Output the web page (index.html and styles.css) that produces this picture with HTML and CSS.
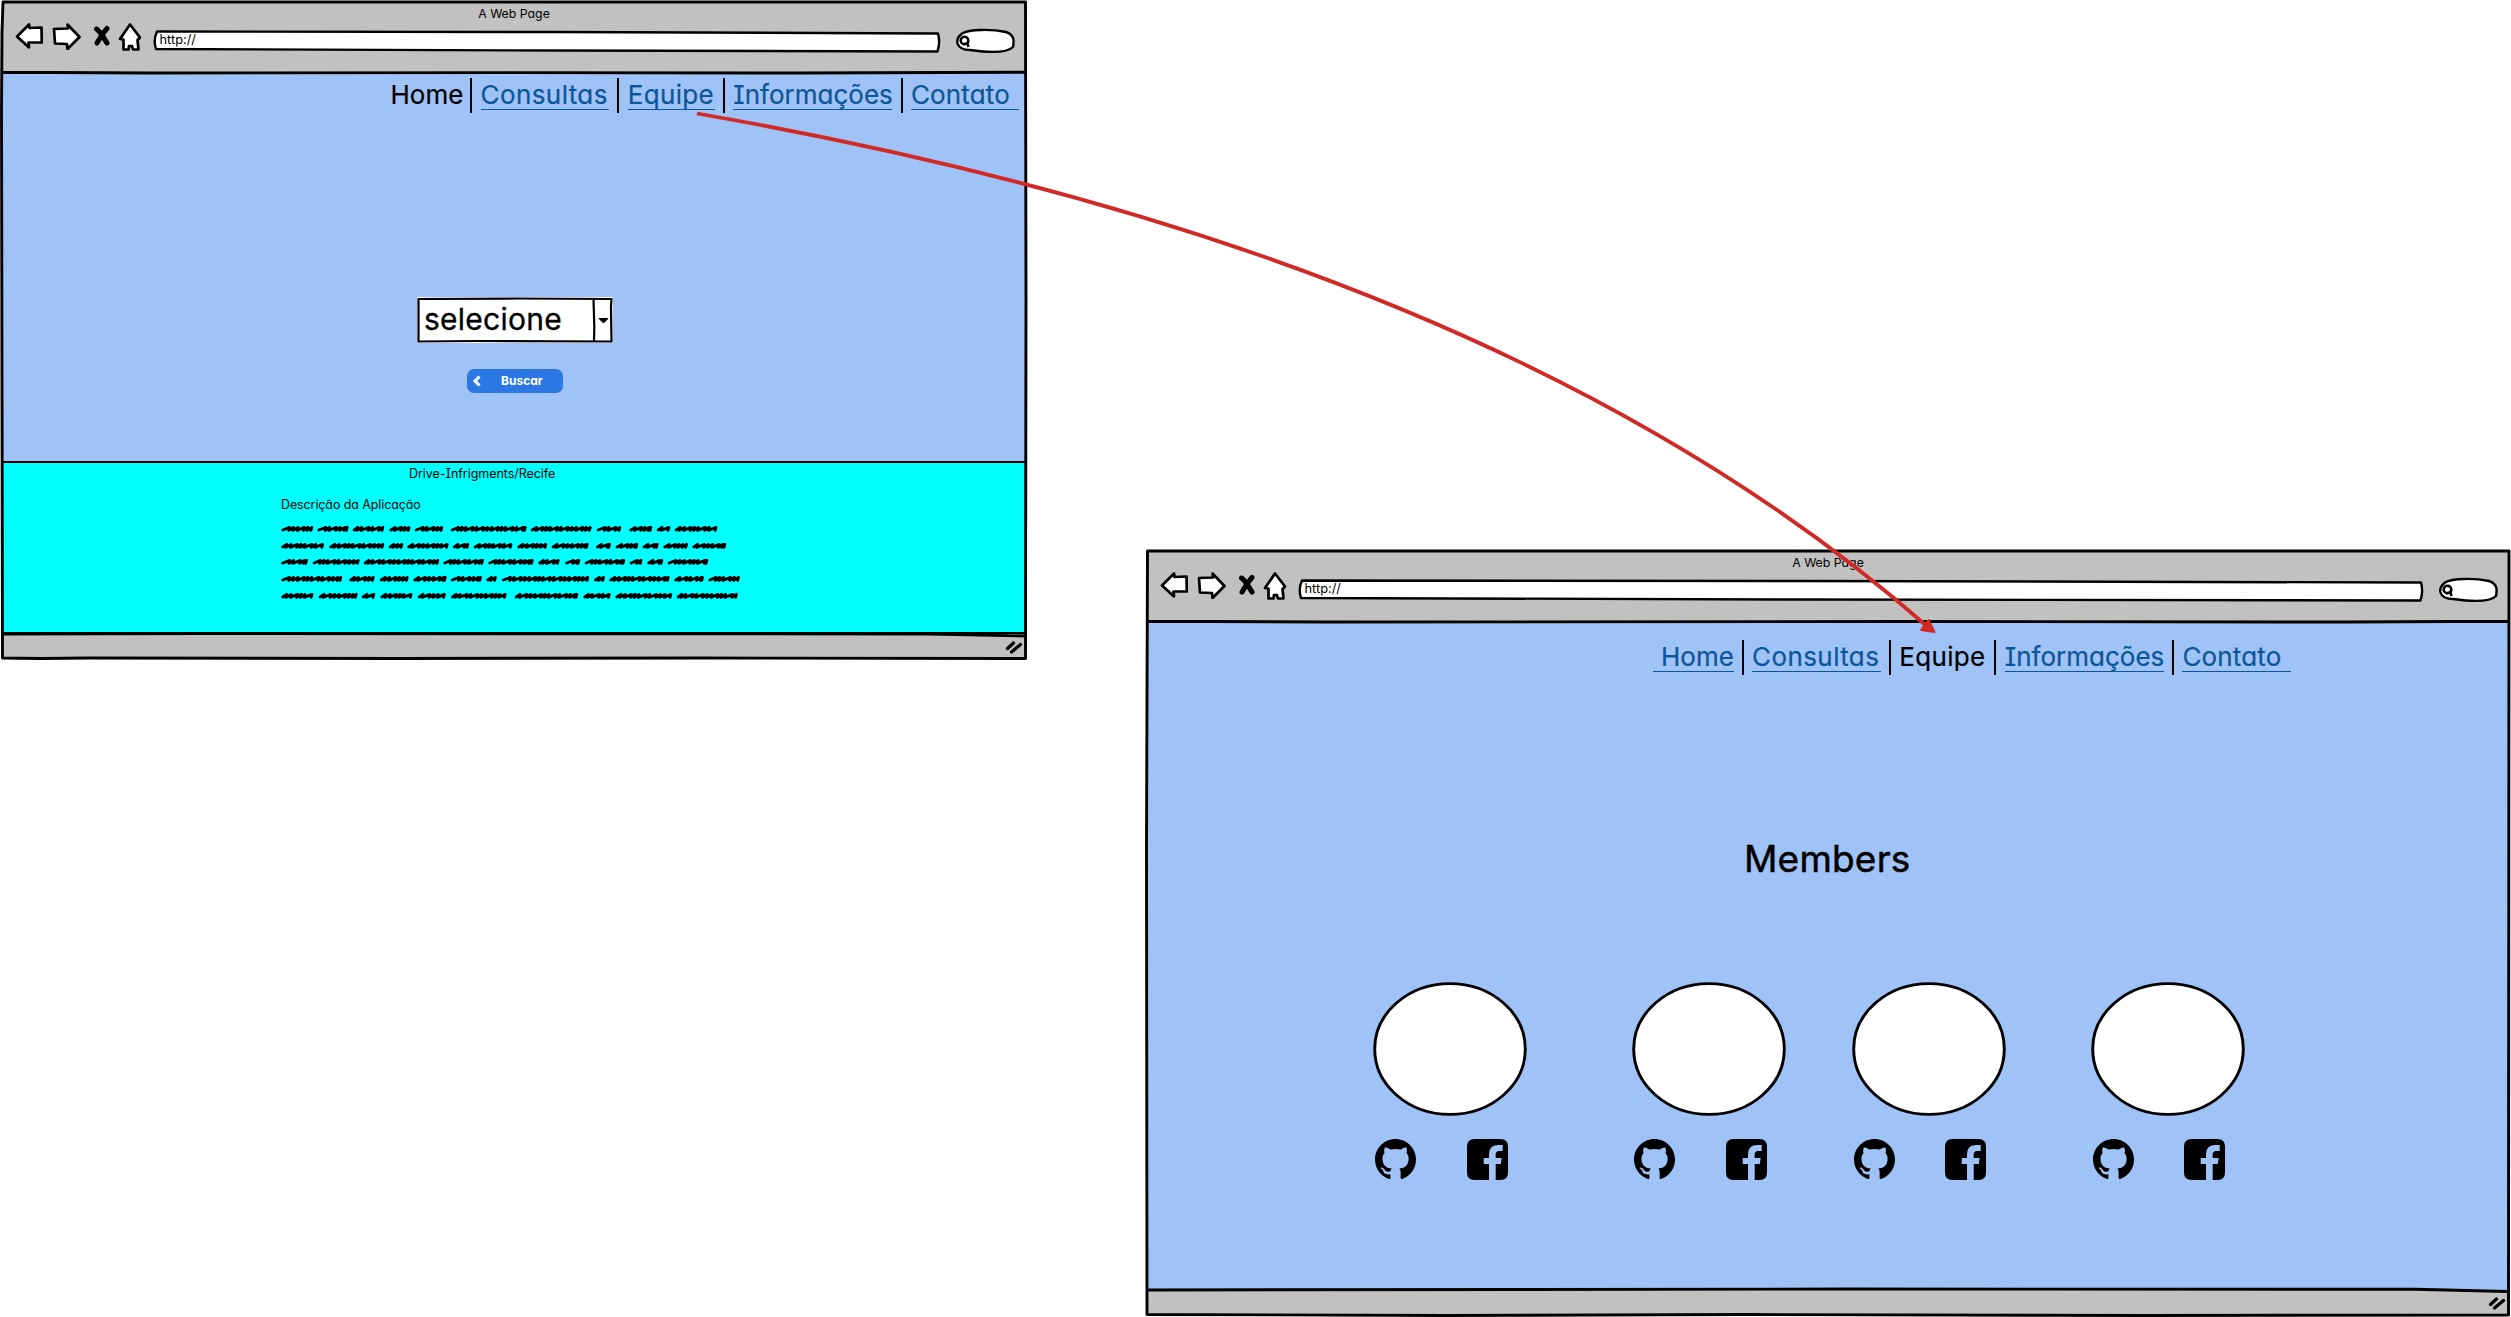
FILE: index.html
```html
<!DOCTYPE html>
<html lang="pt-BR">
<head>
<meta charset="utf-8">
<title>Drive-Infrigments/Recife</title>
<link rel="stylesheet" href="styles.css">
</head>
<body>
<svg class="symbols" aria-hidden="true">
  <symbol id="back" viewBox="0 0 28 28"><path d="M2 14.500 L14 2.500 L14.500 6 L26.500 5.500 L26.800 20.500 L13.500 20.500 L14 25.500 Z"/></symbol>
  <symbol id="forward" viewBox="0 0 29 28"><path d="M2 7 L16 6.500 L15.500 2.500 L27.500 15 L15.500 27 L15 22 L3 21.500 Z"/></symbol>
  <symbol id="stop" viewBox="0 0 18 22"><path d="M3.500 4 C7 6 11 13 14 18 M14 3.500 C10 8 7 13 4 18"/></symbol>
  <symbol id="home" viewBox="0 0 24 30"><path d="M12 2.500 L22 15.500 L19.500 18 L20.500 27.500 L15 27.500 L14 24 L11 24 L10.500 27.500 L5.500 27.500 L5.500 17.500 L2 17 Z"/></symbol>
  <symbol id="search" viewBox="0 0 61 26"><path class="box" d="M7 5.500 C14 1 37 1 51 4 C60 7 59 14 58 19 C52 25 36 25 15 22 C1 22 -1 12 7 5.500 Z"/><circle class="lens" cx="9.500" cy="12.500" r="3.800"/><path class="lens" d="M8 16.300 L12.500 15.500 L13.500 19"/></symbol>
  <symbol id="github" viewBox="0 0 16 16"><path d="M8 0C3.580 0 0 3.580 0 8c0 3.540 2.290 6.530 5.470 7.590.4.070.55-.17.55-.38 0-.19-.01-.82-.01-1.490-2.010.37-2.530-.49-2.690-.94-.09-.23-.48-.94-.82-1.130-.28-.15-.68-.52-.01-.53.63-.01 1.080.58 1.230.82.72 1.210 1.870.87 2.330.66.070-.52.28-.87.51-1.070-1.780-.2-3.640-.89-3.640-3.950 0-.87.31-1.590.82-2.150-.08-.2-.36-1.020.08-2.120 0 0 .67-.21 2.200.82.64-.18 1.320-.27 2-.27s1.360.09 2 .27c1.530-1.040 2.200-.82 2.200-.82.44 1.100.16 1.920.08 2.120.51.56.82 1.270.82 2.150 0 3.070-1.870 3.750-3.650 3.950.29.25.54.73.54 1.480 0 1.070-.01 1.930-.01 2.200 0 .21.15.46.55.38A8.010 8.010 0 0 0 16 8c0-4.420-3.580-8-8-8z"/></symbol>
  <symbol id="facebook" viewBox="0 0 41 41"><path d="M7.500 0 H33.500 Q41 0 41 7.500 V33.500 Q41 41 33.500 41 H28.700 V25 H33.800 L34.700 19 H28.700 V15.500 Q28.700 12 32 12 H35.700 V6 H31.500 Q22 6 22 15 V19 H16.700 V25 H22 V41 H7.500 Q0 41 0 33.500 V7.500 Q0 0 7.500 0 Z"/></symbol>
  <symbol id="grip" viewBox="0 0 18 14"><path d="M2.500 8.500 L8.500 3 M6.500 12 L15.500 4.500"/></symbol>
</svg>

<section class="window window-home">
  <svg class="frame" viewBox="0 0 1028 661"><path d="M2 32 L3 2 L1025.500 2 L1026 300 L1025.500 658.500 L700 658 L400 658.500 L90 658 L40 658.500 L2.500 658 L1.500 110 Z M3 72.300 L150 73 L520 72.600 L800 73 L1025 72.200 M2 634 L200 633.500 L930 634 L1025 636"/></svg>
  <header class="chrome">
    <div class="title">A Web Page</div>
    <div class="toolbar">
      <svg class="tool back"><use href="#back"/></svg>
      <svg class="tool forward"><use href="#forward"/></svg>
      <svg class="tool stop"><use href="#stop"/></svg>
      <svg class="tool home"><use href="#home"/></svg>
      <div class="address"><svg viewBox="0 0 788 24" preserveAspectRatio="none"><path d="M4 2.500 L400 3 L785 4.500 Q787.500 13 784.500 22.500 L400 21.500 L3 20 Q0 11 4 2.500 Z"/></svg><span>http://</span></div>
      <svg class="search"><use href="#search"/></svg>
    </div>
  </header>
  <main class="page">
    <nav class="menu">
      <a class="item w-home current">Home</a><i></i><a class="item w-consultas">Consultas</a><i></i><a class="item w-equipe">Equipe</a><i></i><a class="item w-info">Informações</a><i></i><a class="item w-contato">Contato</a>
    </nav>
    <div class="form">
      <div class="select">
        <svg class="outline" viewBox="0 0 196 46"><path d="M1.500 2 L100 1.500 L194.500 2 L194 10 L194.500 44.500 L60 44 L1.500 44.500 Z M176.500 2 L177.300 30 L177 44"/><path class="caret" d="M182 21.500 L191 21.500 L186.500 26 Z"/></svg>
        <span>selecione</span>
      </div>
      <button class="submit"><svg viewBox="0 0 8 12"><path d="M6.500 1.500 L2 6 L6.500 10.500"/></svg><span>Buscar</span></button>
    </div>
    <section class="about">
      <h2>Drive-Infrigments/Recife</h2>
      <p>Descrição da Aplicação</p>
      <svg class="scribble" id="scribble" viewBox="0 0 470 90"></svg>
    </section>
  </main>
  <footer class="status"><svg class="grip"><use href="#grip"/></svg></footer>
</section>

<section class="window window-team">
  <svg class="frame" viewBox="0 0 1366 768"><path d="M2.500 2 L1364 2 L1363.500 766 L1000 766.500 L600 765.500 L300 766.500 L2 765.500 L1.500 300 Z M2 72.300 L180 73 L760 72.500 L1200 73 L1363 72.200 M2 741 L700 740 L1270 740.300 L1363 742.500"/></svg>
  <header class="chrome">
    <div class="title">A Web Page</div>
    <div class="toolbar">
      <svg class="tool back"><use href="#back"/></svg>
      <svg class="tool forward"><use href="#forward"/></svg>
      <svg class="tool stop"><use href="#stop"/></svg>
      <svg class="tool home"><use href="#home"/></svg>
      <div class="address"><svg viewBox="0 0 1126 24" preserveAspectRatio="none"><path d="M4 2.500 L500 3 L1123 4.500 Q1125.500 13 1122.500 22.500 L500 21.500 L3 20 Q0 11 4 2.500 Z"/></svg><span>http://</span></div>
      <svg class="search"><use href="#search"/></svg>
    </div>
  </header>
  <main class="page">
    <nav class="menu">
      <a class="item w-home">Home</a><i></i><a class="item w-consultas">Consultas</a><i></i><a class="item w-equipe current">Equipe</a><i></i><a class="item w-info">Informações</a><i></i><a class="item w-contato">Contato</a>
    </nav>
    <h1>Members</h1>
    <div class="members">
      <article class="member"><svg class="avatar" viewBox="0 0 154 134"><ellipse cx="77" cy="67" rx="75.300" ry="65.400"/></svg><div class="links"><svg><use href="#github"/></svg><svg><use href="#facebook"/></svg></div></article>
      <article class="member"><svg class="avatar" viewBox="0 0 154 134"><ellipse cx="77" cy="67" rx="75.300" ry="65.400"/></svg><div class="links"><svg><use href="#github"/></svg><svg><use href="#facebook"/></svg></div></article>
      <article class="member"><svg class="avatar" viewBox="0 0 154 134"><ellipse cx="77" cy="67" rx="75.300" ry="65.400"/></svg><div class="links"><svg><use href="#github"/></svg><svg><use href="#facebook"/></svg></div></article>
      <article class="member"><svg class="avatar" viewBox="0 0 154 134"><ellipse cx="77" cy="67" rx="75.300" ry="65.400"/></svg><div class="links"><svg><use href="#github"/></svg><svg><use href="#facebook"/></svg></div></article>
    </div>
  </main>
  <footer class="status"><svg class="grip"><use href="#grip"/></svg></footer>
</section>

<svg class="arrow" viewBox="0 0 2511 1317"><path class="line" d="M697 113.500 Q1503 253 1929 628"/><path class="head" d="M1934.500 632 L1921 630 L1928.500 620 Z"/></svg>
<script src="scribble.js"></script>
</body>
</html>
```
FILE: styles.css
```css
* { box-sizing: border-box; }
body {
  margin: 0;
  position: relative;
  width: 2511px;
  height: 1317px;
  overflow: hidden;
  background: #fff;
  color: #000;
  font-family: Inter, "Noto Sans", sans-serif;
  font-feature-settings: "cv11", "cv08";
}
svg { display: block; overflow: visible; }
.symbols { position: absolute; width: 0; height: 0; }

/* Windows on the canvas */
.window { position: absolute; display: flex; flex-direction: column; }
.window-home { left: 0; top: 0; width: 1028px; height: 661px; padding: 2px; }
.window-team { left: 1145px; top: 549px; width: 1366px; height: 768px; padding: 2px; }
.frame { position: absolute; inset: 0; width: 100%; height: 100%; z-index: 1; fill: none; stroke: #000; stroke-width: 2.9; stroke-linejoin: round; }

.chrome { height: 71px; background: #c1c1c1; display: flex; flex-direction: column; flex: none; }
.title { height: 20px; padding-top: 4px; text-align: center; font-size: 12.300px; line-height: 15px; }
.toolbar { display: flex; align-items: flex-start; padding: 0 10px 0 13px; }
.tool { flex: none; fill: #fff; stroke: #000; stroke-width: 2.700; stroke-linejoin: round; stroke-linecap: round; }
.back { width: 28px; height: 28px; }
.forward { width: 29px; height: 28px; margin-left: 9px; }
.stop { width: 18px; height: 22px; margin: 3px 0 0 12px; fill: none; stroke-width: 5; }
.home { width: 24px; height: 30px; margin-left: 7px; }
.address { position: relative; flex: 1; height: 24px; margin: 7px 14px 0 11px; padding-left: 6.500px; }
.address svg { position: absolute; inset: 0; width: 100%; height: 100%; fill: #fff; stroke: #000; stroke-width: 2.400; stroke-linejoin: round; }
.address span { position: relative; display: block; font-size: 12.800px; line-height: 22px; }
.search { flex: none; width: 61px; height: 26px; margin-top: 6px; fill: #fff; stroke: #000; stroke-width: 2.400; }

.page { flex: 1; display: flex; flex-direction: column; background: #9fc3f7; min-height: 0; }
.status { height: 25px; flex: none; background: #c1c1c1; display: flex; justify-content: flex-end; padding: 6px 3px 0 0; }
.grip { width: 18px; height: 14px; stroke: #000; stroke-width: 3.200; stroke-linecap: round; }

/* Link bar */
.menu { display: flex; font-size: 26px; line-height: 31px; -webkit-text-stroke: .2px; }
.menu i { flex: none; width: 2px; height: 35px; margin: 0 8.300px; background: #000; }
.item { flex: none; height: 31px; margin-top: 1px; color: #0c5597; white-space: nowrap; border-bottom: 1.500px solid #0c5597; }
.item.current { color: #000; border-color: transparent; }
.w-home { width: 71.500px; }
.w-consultas { width: 128.500px; letter-spacing: .4px; }
.w-equipe { width: 87px; letter-spacing: .35px; }
.w-info { width: 159px; }
.w-contato { width: 108.500px; letter-spacing: .15px; }
.window-home .menu { padding: 5px 0 0 388.500px; }
.window-team .menu { padding: 18px 0 0 505.500px; }
.window-team .w-home { width: 81px; padding-left: 8.500px; }

/* Search form */
.form { flex: 1; display: flex; flex-direction: column; align-items: flex-start; padding: 184px 0 0 415px; }
.select { position: relative; width: 196px; height: 46px; padding-left: 7px; background: #fff; font-size: 30px; line-height: 44px; letter-spacing: .25px; -webkit-text-stroke: .3px; }
.select span { position: relative; }
.outline { position: absolute; inset: 0; fill: none; stroke: #000; stroke-width: 2.200; }
.outline .caret { fill: #000; stroke-width: 1; }
.submit { display: flex; align-items: center; width: 96px; height: 24px; margin: 26px 0 0 50px; padding: 0 0 0 6px; border: 0; border-radius: 7px; background: #2b78e4; color: #fff; font: 700 12px/24px Inter, sans-serif; font-feature-settings: inherit; }
.submit svg { width: 8px; height: 12px; fill: none; stroke: #fff; stroke-width: 3; }
.submit span { margin-left: 20px; }

.about { flex: none; height: 173px; margin: 0 -1px; background: #0ff; border: 2px solid #000; }
.about h2 { margin: 0; padding: 2px 0 0 406px; font-size: 12.500px; font-weight: 400; line-height: 18px; letter-spacing: -.05px; }
.about p { margin: 13px 0 0 278px; font-size: 12.400px; line-height: 18px; letter-spacing: -.05px; }
.scribble { width: 470px; height: 90px; margin: 6px 0 0 277px; fill: none; stroke: #000; stroke-width: 2.900; stroke-linejoin: round; stroke-linecap: round; }

/* Team */
h1 { margin: 162px 0 0 597px; font-size: 37px; font-weight: 400; line-height: 44px; letter-spacing: .2px; -webkit-text-stroke: .5px; }
.members { display: flex; margin: 101px 0 0 226px; }
.member { width: 154px; margin-right: 105px; }
.member:nth-child(2) { margin-right: 66px; }
.member:nth-child(3) { margin-right: 85px; }
.member:last-child { margin-right: 0; }
.avatar { width: 154px; height: 134px; fill: #fff; stroke: #000; stroke-width: 2.900; }
.links { display: flex; gap: 51px; padding: 23px 0 0 2px; }
.member:nth-child(n+3) .links { gap: 50px; }
.links svg { width: 41px; height: 41px; flex: none; }

.lens { fill: none; stroke-width: 2.600; }
.arrow { position: absolute; left: 0; top: 0; width: 2511px; height: 1317px; z-index: 2; pointer-events: none; }
.arrow .line { fill: none; stroke: #d12a26; stroke-width: 3.800; }
.arrow .head { fill: #d12a26; stroke: #d12a26; stroke-width: 2; stroke-linejoin: round; }
```
FILE: scribble.js
```javascript
// Placeholder copy: each pair is the start and end of one scribbled word.
const rows = [
  [9, [64,160,172,266,278,373,388,452,464,550,572,800,812,995,1010,1084,1108,1177,1190,1231,1244,1373]],
  [26, [64,193,208,373,386,430,442,566,578,628,641,758,772,862,875,986,1008,1053,1067,1135,1148,1196,1210,1284,1297,1399]],
  [42, [64,144,158,299,311,538,550,672,685,821,835,902,916,961,974,1096,1109,1148,1162,1210,1223,1345]],
  [59, [64,247,268,344,359,446,460,560,572,666,679,713,726,988,1002,1035,1048,1229,1243,1332,1345,1440]],
  [76, [64,162,176,293,305,346,361,460,473,560,573,740,764,955,970,1052,1066,1237,1250,1436]]
];
const steps = [6.8, 4, 4.4, 6.2, 3.6, 4, 7, 3.8];
let d = "", k = 0;
for (const [y, words] of rows) {
  for (let i = 0; i < words.length; i += 2) {
    let x = words[i] / 3 - 18.5;
    const end = words[i + 1] / 3 - 21.5;
    d += `M${x.toFixed(1)} ${y + 1}`;
    while (x < end - 1) {
      const s = steps[k++ % steps.length];
      x = Math.min(x + s, end);
      d += `L${x.toFixed(1)} ${y - 1.6}L${(x - 0.8).toFixed(1)} ${y + 1.3}`;
    }
  }
}
const path = document.createElementNS("http://www.w3.org/2000/svg", "path");
path.setAttribute("d", d);
document.getElementById("scribble").appendChild(path);
```
